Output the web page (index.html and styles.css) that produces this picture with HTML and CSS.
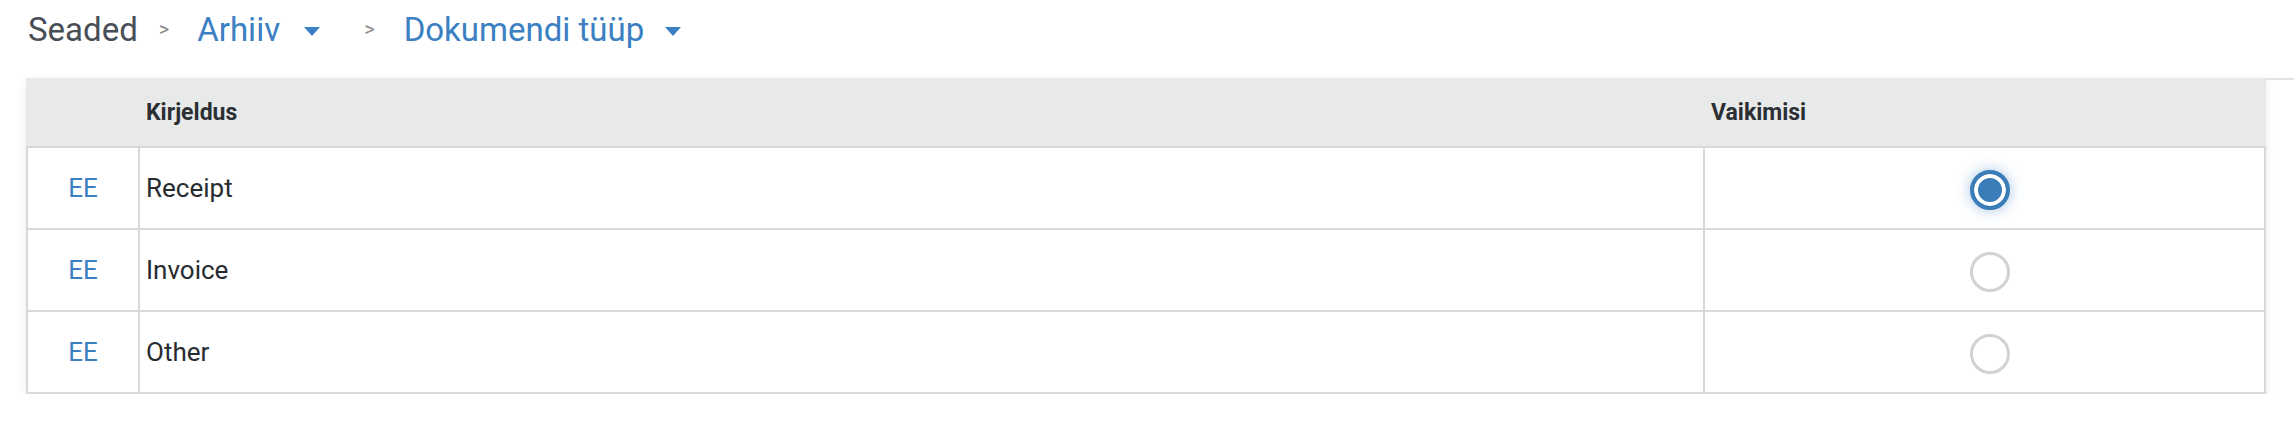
FILE: index.html
```html
<!DOCTYPE html>
<html lang="et">

<head>
    <meta charset="UTF-8">
    <meta name="viewport" content="width=device-width, initial-scale=1.0">
    <title>Dokumendi tüüp</title>

    <link rel="stylesheet" href="styles.css">
</head>

<body>
    <div class="breadcrumb">
        <span class="crumbRoot">Seaded</span>
        <span class="crumbSep">&gt;</span>
        <span class="crumbLink">Arhiiv <i class="caret"></i></span>
        <span class="crumbSep crumbSepWide">&gt;</span>
        <span class="crumbLink">Dokumendi tüüp <i class="caret caretNear"></i></span>
    </div>

    <div class="tableRow">
        <table class="typeTable">
            <thead>
                <tr>
                    <th class="langCol"></th>
                    <th class="descCol">Kirjeldus</th>
                    <th class="defaultCol">Vaikimisi</th>
                </tr>
            </thead>
            <tbody>
                <tr>
                    <td class="lang">EE</td>
                    <td class="desc">Receipt</td>
                    <td class="default"><input type="radio" name="default" checked></td>
                </tr>
                <tr>
                    <td class="lang">EE</td>
                    <td class="desc">Invoice</td>
                    <td class="default"><input type="radio" name="default"></td>
                </tr>
                <tr>
                    <td class="lang">EE</td>
                    <td class="desc">Other</td>
                    <td class="default"><input type="radio" name="default"></td>
                </tr>
            </tbody>
        </table>
        <div class="sideEdge"></div>
    </div>
</body>

</html>
```

FILE: styles.css
```css
body {
    font-family: 'Roboto', 'Liberation Sans', sans-serif;
    background-color: #fff;
    margin: 0;
    padding: 0;
    color: #262b30;
}

.breadcrumb {
    height: 58px;
    display: flex;
    align-items: center;
    padding-left: 28px;
    margin-bottom: 20px;
    font-size: 33px;
}

.crumbRoot {
    color: #484e55;
}

.crumbSep {
    font-size: 20px;
    color: #8a8a8a;
    margin: 0 28px 0 21px;
}

.crumbSepWide {
    margin-left: 44px;
    margin-right: 29px;
}

.crumbLink {
    color: #3b80c3;
    display: flex;
    align-items: center;
}

.caret {
    display: inline-block;
    width: 0;
    height: 0;
    margin-left: 24px;
    margin-top: 5px;
    border-left: 8.5px solid transparent;
    border-right: 8.5px solid transparent;
    border-top: 9px solid #3b80c3;
}

.caretNear {
    margin-left: 21px;
}

.tableRow {
    display: flex;
    padding-left: 26px;
}

.sideEdge {
    flex: 1;
    border-top: 2px solid #e2e2e2;
    height: 0;
}

.typeTable {
    width: 2240px;
    table-layout: fixed;
    border-collapse: separate;
    border-spacing: 0;
    box-shadow: 0 3px 10px rgba(0, 0, 0, 0.08);
}

.typeTable th,
.typeTable td {
    box-sizing: border-box;
    padding: 0 6px;
    text-align: left;
}

.typeTable th {
    height: 70px;
    background-color: #e8eaea;
    border-bottom: 2px solid #d7d7d7;
    font-size: 23px;
    font-weight: 700;
    color: #2b2f33;
}

.langCol {
    width: 114px;
}

.descCol {
    width: 1565px;
}

.typeTable td {
    height: 82px;
    font-size: 26px;
    border-right: 2px solid #d9d9d9;
    border-bottom: 2px solid #d9d9d9;
}

.typeTable td.lang {
    border-left: 2px solid #d9d9d9;
    text-align: center;
    color: #3b80c3;
}

.typeTable td.default {
    text-align: center;
    padding: 0;
}

.default input {
    appearance: none;
    -webkit-appearance: none;
    box-sizing: border-box;
    width: 40px;
    height: 40px;
    margin: 4px 0 0 10px;
    border: 3px solid #d2d2d2;
    border-radius: 50%;
    background-color: #fff;
    vertical-align: middle;
}

.default input:checked {
    border: 4px solid #3a7db8;
    background-color: #3a7db8;
    box-shadow: inset 0 0 0 4px #fff, 0 0 14px rgba(58, 127, 196, 0.45);
}
```
